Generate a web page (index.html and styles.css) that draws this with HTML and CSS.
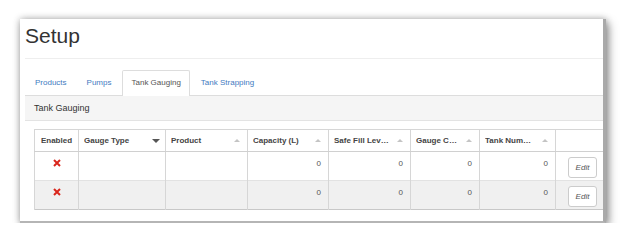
FILE: index.html
```html
<!DOCTYPE html>
<html lang="en">
<head>
  <meta charset="UTF-8" />
  <title>Setup - Tank Gauging</title>
  <link rel="stylesheet" href="styles.css">
</head>
<body>
  <div class="ventana">
    <div class="pagina">
      <h1>Setup</h1>
      <hr class="separador" />

      <ul class="tabs">
        <li><a href="#">Products</a></li>
        <li><a href="#">Pumps</a></li>
        <li class="activa"><a href="#">Tank Gauging</a></li>
        <li><a href="#">Tank Strapping</a></li>
      </ul>

      <div class="panel">
        <div class="panel-titulo">Tank Gauging</div>
        <div class="panel-cuerpo">
          <table class="tabla">
            <colgroup>
              <col style="width:44px" />
              <col style="width:87px" />
              <col style="width:82px" />
              <col style="width:81px" />
              <col style="width:82px" />
              <col style="width:69px" />
              <col style="width:76px" />
              <col style="width:80px" />
            </colgroup>
            <thead>
              <tr>
                <th class="centro"><span class="th-texto">Enabled</span></th>
                <th><div class="th-flex"><span class="th-texto">Gauge Type</span><span class="orden abajo"></span></div></th>
                <th><div class="th-flex"><span class="th-texto">Product</span><span class="orden"></span></div></th>
                <th><div class="th-flex"><span class="th-texto">Capacity (L)</span><span class="orden"></span></div></th>
                <th><div class="th-flex"><span class="th-texto">Safe Fill Level (L)</span><span class="orden"></span></div></th>
                <th><div class="th-flex"><span class="th-texto">Gauge Code</span><span class="orden"></span></div></th>
                <th><div class="th-flex"><span class="th-texto">Tank Number</span><span class="orden"></span></div></th>
                <th></th>
              </tr>
            </thead>
            <tbody id="filas"></tbody>
          </table>
        </div>
      </div>
    </div>
  </div>

  <script>
    const tanques = [
      { capacidad: 0, llenado: 0, codigo: 0, numero: 0 },
      { capacidad: 0, llenado: 0, codigo: 0, numero: 0 }
    ];

    const cruz = '<svg class="cruz" width="8" height="8" viewBox="0 0 8 8"><path d="M1 1L7 7M7 1L1 7" stroke="#d9261c" stroke-width="2"/></svg>';

    const cuerpo = document.getElementById('filas');
    tanques.forEach(t => {
      const tr = document.createElement('tr');
      tr.innerHTML = `<td class="centro">${cruz}</td><td></td><td></td>` +
        `<td class="num">${t.capacidad}</td><td class="num">${t.llenado}</td>` +
        `<td class="num">${t.codigo}</td><td class="num">${t.numero}</td>` +
        `<td class="acciones"><button class="btn-editar">Edit</button></td>`;
      cuerpo.appendChild(tr);
    });
  </script>
</body>
</html>
```

FILE: styles.css
```css
body {
  margin: 0;
  background: #fff;
  font-family: "Liberation Sans", Arial, sans-serif;
  color: #333;
}
.ventana {
  margin: 19px 0 0 20px;
  width: 583px;
  height: 202px;
  overflow: hidden;
  background: #fff;
  border-right: 3px solid #a9a9a9;
  border-bottom: 2px solid #b5b5b5;
  box-shadow: 0 0 7px rgba(0,0,0,0.3), 3px 4px 9px rgba(0,0,0,0.35);
}
.pagina {
  width: 640px;
  padding: 5px 0 0 5px;
}
h1 {
  margin: 0;
  font-size: 21px;
  line-height: 24px;
  font-weight: normal;
  color: #333;
}
.separador {
  margin: 10px 0 0;
  border: none;
  border-top: 1px solid #eee;
}
.tabs {
  list-style: none;
  margin: 11px 0 0;
  padding: 0;
  display: flex;
  gap: 2px;
}
.tabs li a {
  display: block;
  padding: 0 8px;
  height: 24px;
  line-height: 24px;
  font-size: 8px;
  color: #3f7bbf;
  text-decoration: none;
  border: 1px solid transparent;
  border-bottom: none;
  border-radius: 2px 2px 0 0;
}
.tabs li:first-child a {
  padding-left: 9px;
}
.tabs li.activa a {
  color: #555;
  background: #fff;
  border-color: #ddd;
  height: 25px;
  margin-bottom: -1px;
  position: relative;
}
.panel {
  border-top: 1px solid #ddd;
}
.panel-titulo {
  background: #f5f5f5;
  border-bottom: 1px solid #e3e3e3;
  height: 24px;
  line-height: 24px;
  padding-left: 9px;
  font-size: 9px;
  color: #333;
}
.panel-cuerpo {
  padding: 8px 0 12px 9px;
}
.tabla {
  table-layout: fixed;
  border-collapse: collapse;
  width: 601px;
  font-size: 8px;
  border: 1px solid #c8c8c8;
}
.tabla th {
  height: 21px;
  padding: 0 7px 0 5px;
  text-align: left;
  font-weight: bold;
  color: #444;
  border: 1px solid #d6d6d6;
  border-bottom-color: #d0d0d0;
  white-space: nowrap;
  overflow: hidden;
}
.tabla th.centro {
  text-align: center;
  padding: 0 2px;
}
.th-flex {
  display: flex;
  align-items: center;
  gap: 8px;
}
.th-texto {
  flex: 1;
  min-width: 0;
  overflow: hidden;
  text-overflow: ellipsis;
}
.orden {
  flex: none;
  width: 0;
  height: 0;
  border-left: 3px solid transparent;
  border-right: 3px solid transparent;
  border-bottom: 3px solid #c4c4c4;
}
.orden.abajo {
  border-left-width: 4px;
  border-right-width: 4px;
  border-bottom: none;
  border-top: 4px solid #555;
  margin-right: -2px;
}
.tabla td {
  height: 29px;
  padding: 6px 7px 0;
  vertical-align: top;
  line-height: 12px;
  color: #555;
  border-left: 1px solid #d6d6d6;
  border-right: 1px solid #d6d6d6;
  box-sizing: border-box;
}
.tabla tbody tr:nth-child(2) td {
  background: #f0f0f0;
  border-top: 1px solid #e2e2e2;
}
.tabla td.centro {
  text-align: center;
  padding-top: 7px;
}
.tabla td.num {
  text-align: right;
}
.tabla td.acciones {
  padding: 5px 0 0 12px;
}
.cruz {
  display: inline-block;
}
.btn-editar {
  width: 29px;
  height: 21px;
  padding: 0;
  background: #fff;
  border: 1px solid #ccc;
  border-radius: 3px;
  font-family: "Liberation Sans", Arial, sans-serif;
  font-size: 8px;
  font-style: italic;
  color: #555;
}
```
